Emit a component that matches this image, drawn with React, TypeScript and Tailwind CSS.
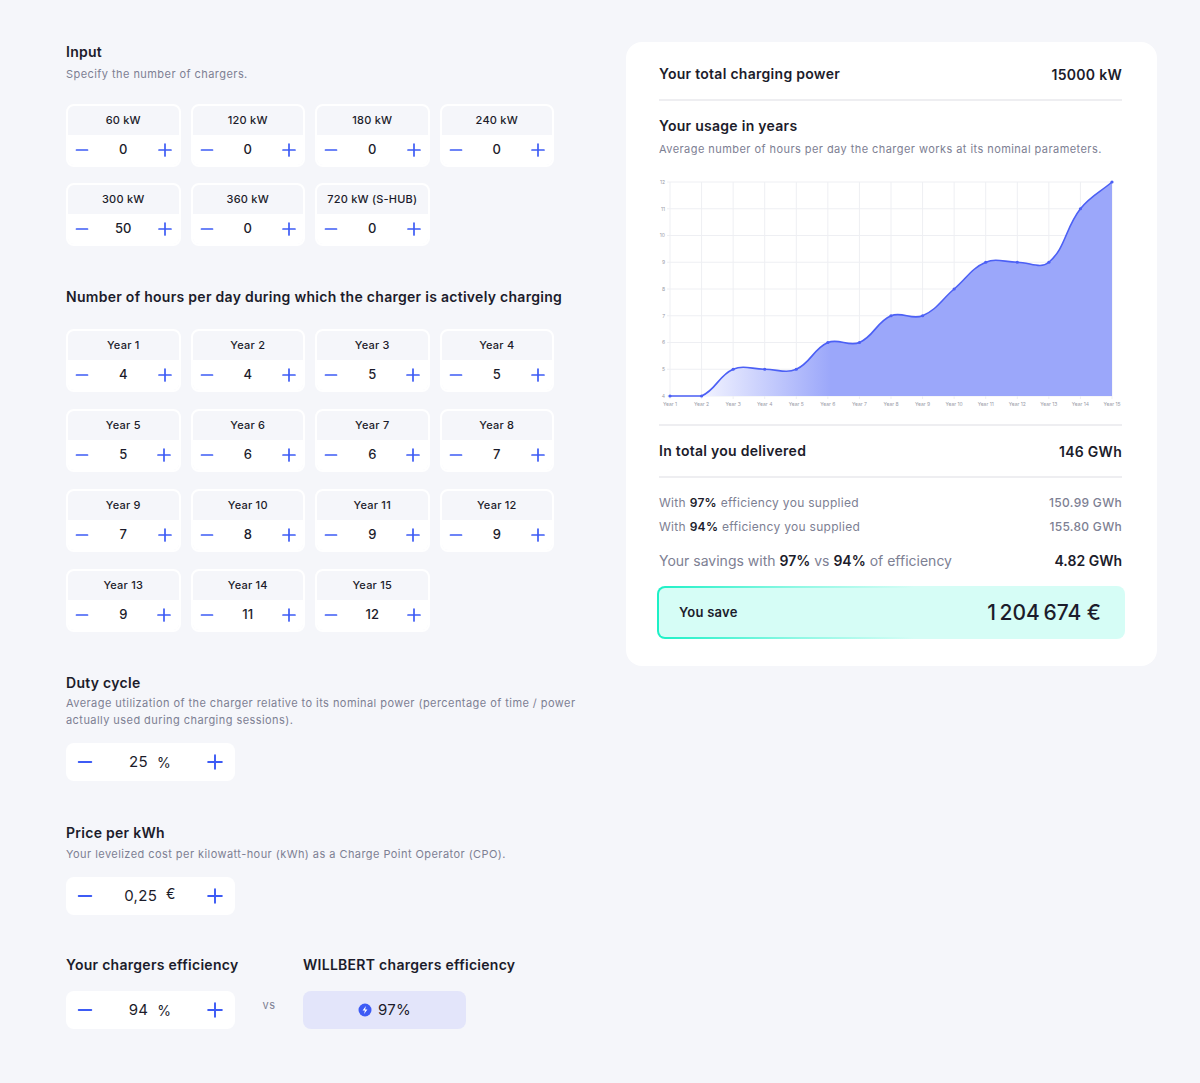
import React from 'react'

const font = { fontFamily: 'Inter, "Noto Sans", sans-serif' }

const Minus = ({ size = 14 }: { size?: number }) => (
  <svg width={size} height={size} viewBox="0 0 14 14" className="shrink-0">
    <line x1="1.5" y1="7" x2="12.5" y2="7" stroke="#3d5bf5" strokeWidth="1.7" strokeLinecap="round" />
  </svg>
)

const Plus = ({ size = 14 }: { size?: number }) => (
  <svg width={size} height={size} viewBox="0 0 14 14" className="shrink-0">
    <line x1="1" y1="7" x2="13" y2="7" stroke="#3d5bf5" strokeWidth="1.7" strokeLinecap="round" />
    <line x1="7" y1="1" x2="7" y2="13" stroke="#3d5bf5" strokeWidth="1.7" strokeLinecap="round" />
  </svg>
)

const Tile = ({ label, value }: { label: string; value: number }) => (
  <div className="h-[63px] rounded-lg border-2 border-white overflow-hidden flex flex-col">
    <div className="h-[29px] flex items-center justify-center text-[11px] tracking-[0.02em] font-medium text-[#1c1c2b]">{label}</div>
    <div className="flex-1 bg-white flex items-center justify-between px-[7px]">
      <Minus />
      <span className="text-[13px] font-medium text-[#1c1c2b]">{value}</span>
      <Plus />
    </div>
  </div>
)

const BigStepper = ({ value, unit, raised }: { value: string; unit: string; raised?: boolean }) => (
  <div className="w-[169px] h-[38px] bg-white rounded-lg flex items-center justify-between pl-[11px] pr-[12px]">
    <Minus size={16} />
    <span className="flex items-center gap-[9px] text-[15px] tracking-[0.02em] text-[#1c1c2b]">
      <span>{value}</span>
      <span className={raised ? '-mt-[6px] text-[14px]' : 'text-[14px]'}>{unit}</span>
    </span>
    <Plus size={16} />
  </div>
)

const Heading = ({ children }: { children: React.ReactNode }) => (
  <p className="text-[14px] leading-5 font-semibold tracking-[0.02em] whitespace-nowrap text-[#1c1c2b]">{children}</p>
)

const Note = ({ children, className = '' }: { children: React.ReactNode; className?: string }) => (
  <p className={`text-[11px] tracking-[0.04em] text-[#7d8093] ${className}`}>{children}</p>
)

const chargers = [
  ['60 kW', 0], ['120 kW', 0], ['180 kW', 0], ['240 kW', 0],
  ['300 kW', 50], ['360 kW', 0], ['720 kW (S-HUB)', 0],
] as const

const years = [4, 4, 5, 5, 5, 6, 6, 7, 7, 8, 9, 9, 9, 11, 12]

const Chart = () => {
  const X0 = 11
  const X1 = 453
  const dx = (X1 - X0) / 14
  const yTop = 7
  const yBot = 221
  const yOf = (v: number) => yBot - ((v - 4) * (yBot - yTop)) / 8
  const pts = years.map((v, i) => ({ x: X0 + i * dx, y: yOf(v) }))
  const t = 0.4
  const cps = pts.map((cur, i) => {
    const prev = pts[i - 1] || cur
    const next = pts[i + 1] || cur
    const d01 = Math.hypot(cur.x - prev.x, cur.y - prev.y)
    const d12 = Math.hypot(next.x - cur.x, next.y - cur.y)
    const s01 = d01 + d12 ? d01 / (d01 + d12) : 0
    const s12 = d01 + d12 ? d12 / (d01 + d12) : 0
    const fa = t * s01
    const fb = t * s12
    const clamp = (y: number) => Math.min(yBot, Math.max(yTop, y))
    return {
      p: { x: cur.x - fa * (next.x - prev.x), y: clamp(cur.y - fa * (next.y - prev.y)) },
      n: { x: cur.x + fb * (next.x - prev.x), y: clamp(cur.y + fb * (next.y - prev.y)) },
    }
  })
  let line = `M${pts[0].x},${pts[0].y}`
  for (let i = 1; i < pts.length; i++) {
    line += ` C${cps[i - 1].n.x},${cps[i - 1].n.y} ${cps[i].p.x},${cps[i].p.y} ${pts[i].x},${pts[i].y}`
  }
  const area = `${line} L${X1},${yBot} L${X0},${yBot} Z`

  return (
    <svg width="463" height="235" viewBox="0 0 463 235" className="block">
      <defs>
        <linearGradient id="fillGrad" gradientUnits="userSpaceOnUse" x1="40" y1="0" x2="172" y2="0">
          <stop offset="0" stopColor="#f4f5ff" />
          <stop offset="1" stopColor="#9ba7fa" />
        </linearGradient>
      </defs>
      {years.map((_, i) => (
        <line key={'v' + i} x1={X0 + i * dx} y1={yTop} x2={X0 + i * dx} y2={yBot + 3} stroke="#eeeff3" strokeWidth="1" />
      ))}
      {[4, 5, 6, 7, 8, 9, 10, 11, 12].map((v) => (
        <line key={'h' + v} x1={X0 - 3} y1={yOf(v)} x2={X1} y2={yOf(v)} stroke="#eeeff3" strokeWidth="1" />
      ))}
      <path d={area} fill="url(#fillGrad)" />
      <path d={line} fill="none" stroke="#4c60f5" strokeWidth="1.6" />
      {pts.map((p, i) => (
        <circle key={'c' + i} cx={p.x} cy={p.y} r="1.6" fill="#4c60f5" />
      ))}
      {[4, 5, 6, 7, 8, 9, 10, 11, 12].map((v) => (
        <text key={'yl' + v} x={X0 - 5} y={yOf(v) + 1.8} textAnchor="end" fontSize="5" fill="#9a9ca8" style={font}>
          {v}
        </text>
      ))}
      {years.map((_, i) => (
        <text key={'xl' + i} x={X0 + i * dx} y={231} textAnchor="middle" fontSize="5" fill="#9a9ca8" style={font}>
          Year {i + 1}
        </text>
      ))}
    </svg>
  )
}

export default function App() {
  return (
    <div className="min-h-[1083px] bg-[#f5f6fa] text-[#1c1c2b]" style={font}>
      <div className="flex items-start gap-[40px] pl-[66px] pt-[42px] pb-[40px]">
        {/* left column */}
        <div className="w-[520px] shrink-0">
          <Heading>Input</Heading>
          <Note className="mt-[4px] leading-4">Specify the number of chargers.</Note>
          <div className="mt-[22px] w-[488px] grid grid-cols-4 gap-x-[10px] gap-y-[16px]">
            {chargers.map(([l, v]) => (
              <Tile key={l} label={l} value={v} />
            ))}
          </div>

          <div className="mt-[41px]">
            <Heading>Number of hours per day during which the charger is actively charging</Heading>
          </div>
          <div className="mt-[22px] w-[488px] grid grid-cols-4 gap-x-[10px] gap-y-[17px]">
            {years.map((v, i) => (
              <Tile key={i} label={`Year ${i + 1}`} value={v} />
            ))}
          </div>

          <div className="mt-[41px]">
            <Heading>Duty cycle</Heading>
            <Note className="mt-[2px] leading-[17px] w-[515px]">
              Average utilization of the charger relative to its nominal power (percentage of time / power actually used during charging sessions).
            </Note>
            <div className="mt-[14px]">
              <BigStepper value="25" unit="%" />
            </div>
          </div>

          <div className="mt-[42px]">
            <Heading>Price per kWh</Heading>
            <Note className="mt-[3px] leading-4">
              Your levelized cost per kilowatt-hour (kWh) as a Charge Point Operator (CPO).
            </Note>
            <div className="mt-[15px]">
              <BigStepper value="0,25" unit="€" raised />
            </div>
          </div>

          <div className="mt-[40px] flex items-start">
            <div className="w-[169px]">
              <Heading>Your chargers efficiency</Heading>
              <div className="mt-[16px]">
                <BigStepper value="94" unit="%" />
              </div>
            </div>
            <div className="w-[68px] pt-[42px] text-center text-[11px] tracking-[0.04em] text-[#7d8093]">vs</div>
            <div>
              <Heading>WILLBERT chargers efficiency</Heading>
              <div className="mt-[16px] w-[163px] h-[38px] rounded-lg bg-[#e3e5fa] flex items-center justify-center gap-[6px]">
                <svg width="14" height="14" viewBox="0 0 14 14">
                  <circle cx="7" cy="7" r="6.5" fill="#3d5bf5" />
                  <path d="M7.9 2.9 L4.6 7.6 H6.9 L6.1 11.1 L9.4 6.4 H7.1 Z" fill="#ffffff" />
                </svg>
                <span className="text-[15px] tracking-[0.02em] text-[#1c1c2b]">97%</span>
              </div>
            </div>
          </div>
        </div>

        {/* right card */}
        <div className="w-[531px] shrink-0 bg-white rounded-2xl pl-[33px] pr-[35px] pt-[22px] pb-[27px]">
          <div className="flex justify-between items-center h-5">
            <Heading>Your total charging power</Heading>
            <span className="text-[14px] font-semibold tracking-[0.02em]">15000 kW</span>
          </div>
          <div className="mt-[15px] h-[2px] bg-[#eeeef1]" />
          <div className="mt-[15px]">
            <Heading>Your usage in years</Heading>
          </div>
          <Note className="mt-[5px] leading-4">
            Average number of hours per day the charger works at its nominal parameters.
          </Note>
          <div className="mt-[18px]">
            <Chart />
          </div>
          <div className="mt-[14px] h-[2px] bg-[#eeeef1]" />
          <div className="mt-[15px] flex justify-between items-center h-5">
            <Heading>In total you delivered</Heading>
            <span className="text-[14px] font-semibold tracking-[0.02em]">146 GWh</span>
          </div>
          <div className="mt-[15px] h-[2px] bg-[#eeeef1]" />
          <div className="mt-[16px] flex justify-between items-center h-[18px] text-[12px] tracking-[0.025em] text-[#7d8093]">
            <span>
              With <b className="font-semibold text-[#1c1c2b]">97%</b> efficiency you supplied
            </span>
            <span className="font-medium">150.99 GWh</span>
          </div>
          <div className="mt-[6px] flex justify-between items-center h-[18px] text-[12px] tracking-[0.025em] text-[#7d8093]">
            <span>
              With <b className="font-semibold text-[#1c1c2b]">94%</b> efficiency you supplied
            </span>
            <span className="font-medium">155.80 GWh</span>
          </div>
          <div className="mt-[14px] flex justify-between items-center h-5 text-[14px] text-[#7d8093]">
            <span>
              Your savings with <b className="font-semibold text-[#1c1c2b]">97%</b> vs{' '}
              <b className="font-semibold text-[#1c1c2b]">94%</b> of efficiency
            </span>
            <span className="font-semibold text-[#1c1c2b]">4.82 GWh</span>
          </div>
          <div className="mt-[16px] -ml-[2px] -mr-[3px] rounded-lg p-[2px] bg-[linear-gradient(90deg,#1cf0c6_0%,#8ff8e4_30%,#d6fdf6_55%)]">
            <div className="h-[49px] rounded-[6px] bg-[#d6fdf6] flex items-center justify-between pl-[20px] pr-[22px]">
              <span className="text-[13px] font-semibold tracking-[0.02em]">You save</span>
              <span className="text-[21px] font-medium tracking-tight">1{'\u202F'}204{'\u202F'}674 €</span>
            </div>
          </div>
        </div>
      </div>
    </div>
  )
}
